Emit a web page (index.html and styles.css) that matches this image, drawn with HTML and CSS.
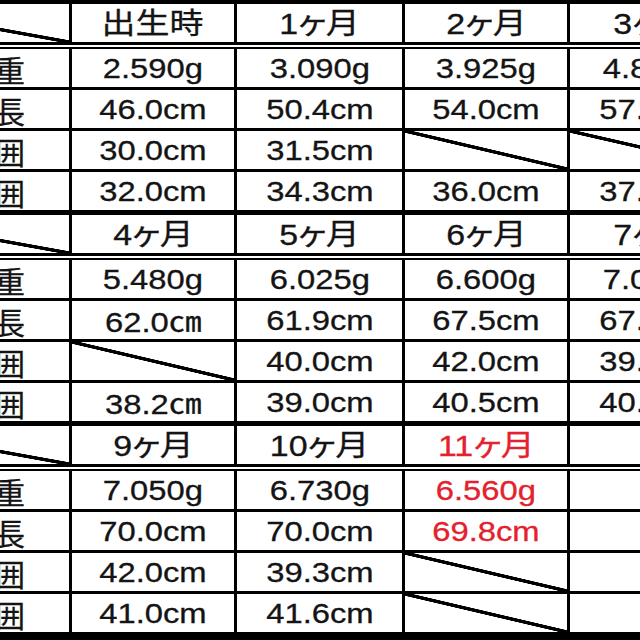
FILE: index.html
```html
<!DOCTYPE html>
<html lang="ja">
<head>
<meta charset="utf-8">
<title>成長記録</title>
<link rel="stylesheet" href="styles.css">
</head>
<body>
<div class="sheet">
  <div class="block">
    <div class="row hdr">
      <div class="cell lbl x"></div>
      <div class="cell"><span class="t h">出生時</span></div>
      <div class="cell"><span class="t h">1ヶ月</span></div>
      <div class="cell"><span class="t h">2ヶ月</span></div>
      <div class="cell"><span class="t h">3ヶ月</span></div>
    </div>
    <div class="row first">
      <div class="cell lbl">体重</div>
      <div class="cell"><span class="t">2.590g</span></div>
      <div class="cell"><span class="t">3.090g</span></div>
      <div class="cell"><span class="t">3.925g</span></div>
      <div class="cell"><span class="t">4.850g</span></div>
    </div>
    <div class="row">
      <div class="cell lbl">身長</div>
      <div class="cell"><span class="t">46.0cm</span></div>
      <div class="cell"><span class="t">50.4cm</span></div>
      <div class="cell"><span class="t">54.0cm</span></div>
      <div class="cell"><span class="t">57.5cm</span></div>
    </div>
    <div class="row">
      <div class="cell lbl">頭囲</div>
      <div class="cell"><span class="t">30.0cm</span></div>
      <div class="cell"><span class="t">31.5cm</span></div>
      <div class="cell x"></div>
      <div class="cell x"></div>
    </div>
    <div class="row last">
      <div class="cell lbl">胸囲</div>
      <div class="cell"><span class="t">32.0cm</span></div>
      <div class="cell"><span class="t">34.3cm</span></div>
      <div class="cell"><span class="t">36.0cm</span></div>
      <div class="cell"><span class="t">37.5cm</span></div>
    </div>
  </div>

  <div class="block">
    <div class="row hdr">
      <div class="cell lbl x"></div>
      <div class="cell"><span class="t h">4ヶ月</span></div>
      <div class="cell"><span class="t h">5ヶ月</span></div>
      <div class="cell"><span class="t h">6ヶ月</span></div>
      <div class="cell"><span class="t h">7ヶ月</span></div>
    </div>
    <div class="row first">
      <div class="cell lbl">体重</div>
      <div class="cell"><span class="t">5.480g</span></div>
      <div class="cell"><span class="t">6.025g</span></div>
      <div class="cell"><span class="t">6.600g</span></div>
      <div class="cell"><span class="t">7.010g</span></div>
    </div>
    <div class="row">
      <div class="cell lbl">身長</div>
      <div class="cell"><span class="t">62.0<span class="cm">㎝</span></span></div>
      <div class="cell"><span class="t">61.9cm</span></div>
      <div class="cell"><span class="t">67.5cm</span></div>
      <div class="cell"><span class="t">67.8cm</span></div>
    </div>
    <div class="row">
      <div class="cell lbl">頭囲</div>
      <div class="cell x"></div>
      <div class="cell"><span class="t">40.0cm</span></div>
      <div class="cell"><span class="t">42.0cm</span></div>
      <div class="cell"><span class="t">39.5cm</span></div>
    </div>
    <div class="row last">
      <div class="cell lbl">胸囲</div>
      <div class="cell"><span class="t">38.2<span class="cm">㎝</span></span></div>
      <div class="cell"><span class="t">39.0cm</span></div>
      <div class="cell"><span class="t">40.5cm</span></div>
      <div class="cell"><span class="t">40.0cm</span></div>
    </div>
  </div>

  <div class="block">
    <div class="row hdr">
      <div class="cell lbl x"></div>
      <div class="cell"><span class="t h">9ヶ月</span></div>
      <div class="cell"><span class="t h">10ヶ月</span></div>
      <div class="cell"><span class="t h red">11ヶ月</span></div>
      <div class="cell"></div>
    </div>
    <div class="row first">
      <div class="cell lbl">体重</div>
      <div class="cell"><span class="t">7.050g</span></div>
      <div class="cell"><span class="t">6.730g</span></div>
      <div class="cell"><span class="t red">6.560g</span></div>
      <div class="cell"></div>
    </div>
    <div class="row">
      <div class="cell lbl">身長</div>
      <div class="cell"><span class="t">70.0cm</span></div>
      <div class="cell"><span class="t">70.0cm</span></div>
      <div class="cell"><span class="t red">69.8cm</span></div>
      <div class="cell"></div>
    </div>
    <div class="row">
      <div class="cell lbl">頭囲</div>
      <div class="cell"><span class="t">42.0cm</span></div>
      <div class="cell"><span class="t">39.3cm</span></div>
      <div class="cell x"></div>
      <div class="cell"></div>
    </div>
    <div class="row last end">
      <div class="cell lbl">胸囲</div>
      <div class="cell"><span class="t">41.0cm</span></div>
      <div class="cell"><span class="t">41.6cm</span></div>
      <div class="cell x"></div>
      <div class="cell"></div>
    </div>
  </div>
</div>
</body>
</html>
```

FILE: styles.css
```css
html, body {
  margin: 0;
  padding: 0;
  background: #fff;
  overflow: hidden;
}

body {
  width: 640px;
  height: 640px;
  font-family: "Liberation Sans", "Noto Sans CJK JP", sans-serif;
  color: #141414;
}

.sheet {
  margin-left: -141px;
  width: 880px;
  border-top: 4px solid #000;
}

.block {
  display: flex;
  flex-direction: column;
}

.row {
  display: grid;
  grid-template-columns: 213px 165px 168px 165px 169px;
  height: 38px;
  border-bottom: 3px solid #000;
  box-sizing: content-box;
}

.row.hdr {
  border-bottom: 3px solid #000;
}

.row.first {
  margin-top: 2px;
  border-top: 2px solid #000;
}

.row.last {
  border-bottom: 5px solid #000;
}

.row.end {
  border-bottom-width: 9px;
}

.cell {
  box-sizing: border-box;
  border-right: 3px solid #000;
  display: flex;
  align-items: center;
  justify-content: center;
  overflow: hidden;
  white-space: nowrap;
}

.cell.lbl {
  justify-content: flex-end;
  padding-right: 44px;
  padding-top: 2px;
  font-family: "Noto Sans CJK JP", sans-serif;
  font-size: 30px;
  line-height: 1;
  -webkit-text-stroke: 0.3px currentColor;
}

.cell.x {
  background: linear-gradient(to top right,
    transparent calc(50% - 2px),
    #000 calc(50% - 1.5px),
    #000 calc(50% + 1.5px),
    transparent calc(50% + 2px));
}

.t {
  display: inline-block;
  font-size: 28px;
  line-height: 1;
  transform: scaleX(1.17);
  -webkit-text-stroke: 0.3px currentColor;
  padding-top: 2px;
}

.t.h {
  font-size: 29px;
  font-feature-settings: "palt";
}

.cm {
  font-family: "Noto Sans CJK JP", sans-serif;
}

.red {
  color: #e3222d;
}
```
